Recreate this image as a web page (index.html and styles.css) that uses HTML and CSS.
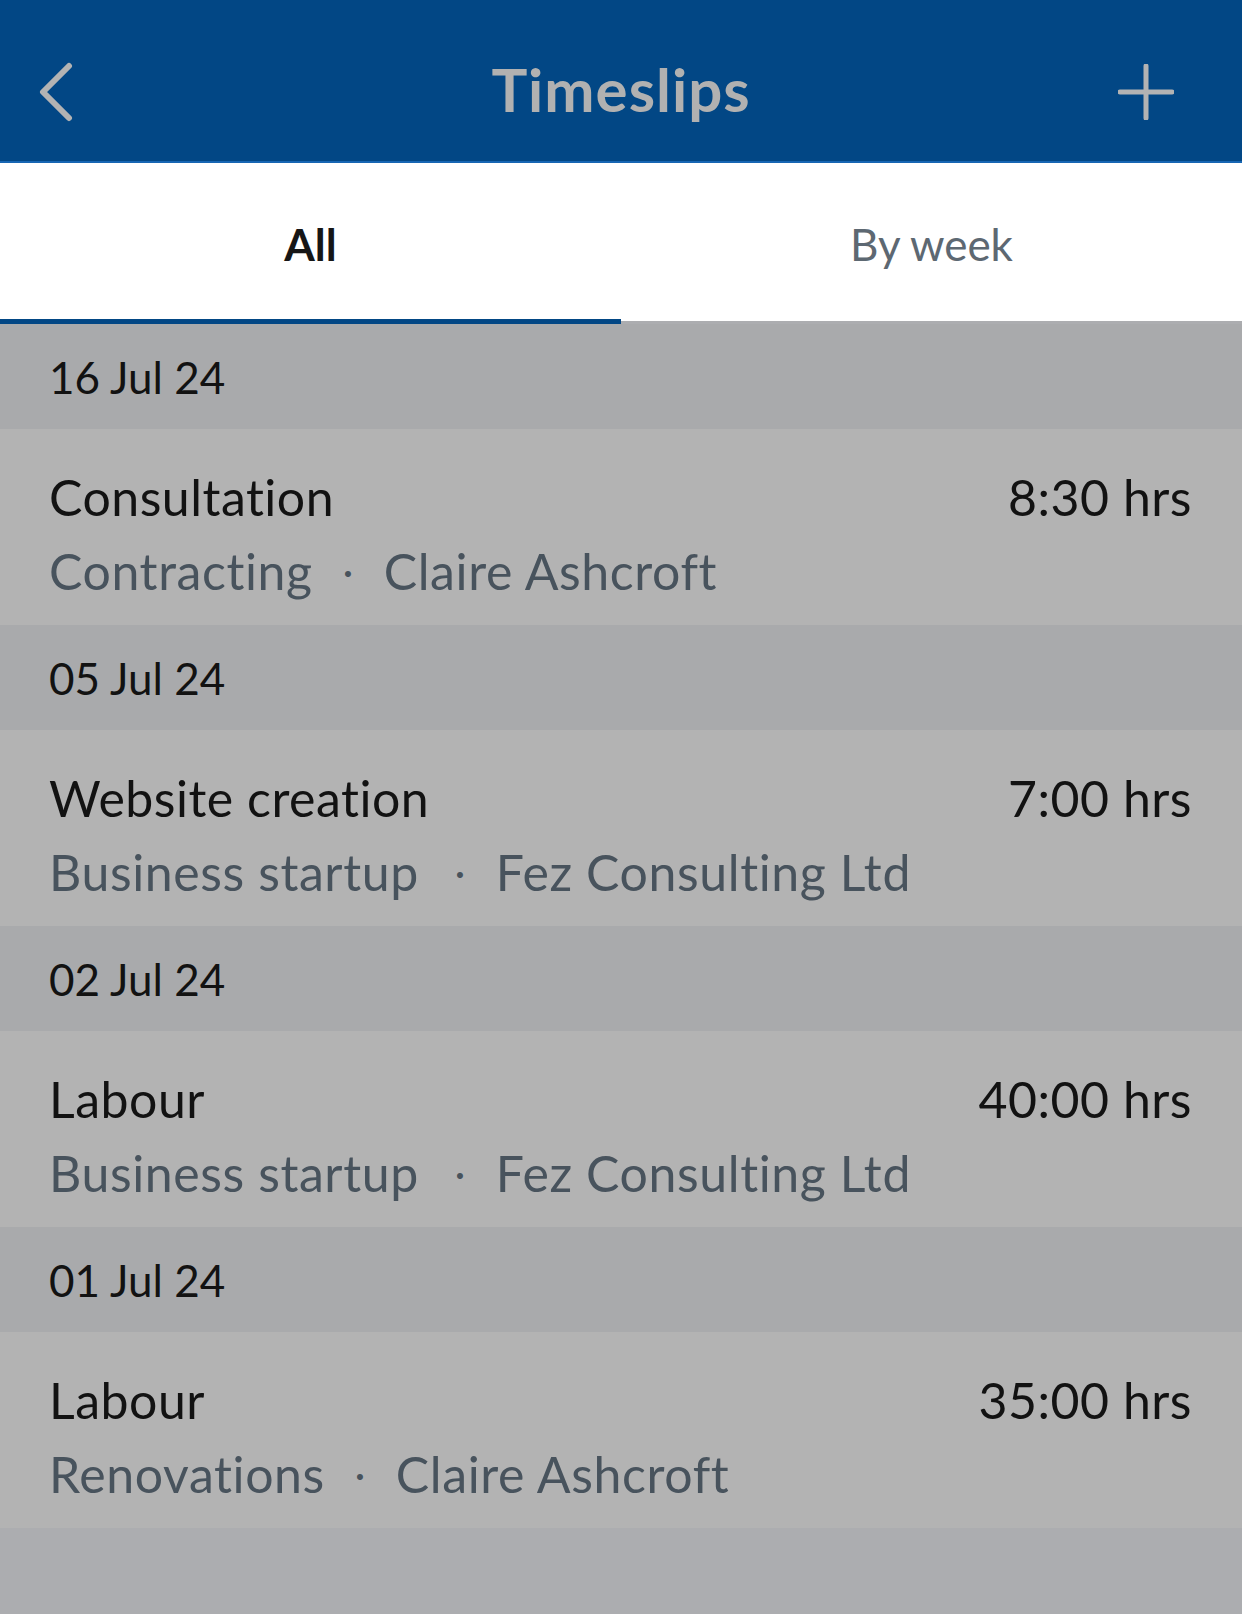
FILE: index.html
```html
<!DOCTYPE html>
<html lang="en">
<head>
<meta charset="utf-8">
<title>Timeslips</title>
<link rel="stylesheet" href="styles.css">
</head>
<body>
<header class="appbar">
  <button class="icon-btn back" aria-label="Back">
    <svg width="40" height="60" viewBox="0 0 40 60"><path d="M33 4 L7 30 L33 56" fill="none" stroke="#b3b3b3" stroke-width="6" stroke-linecap="round" stroke-linejoin="round"/></svg>
  </button>
  <h1 class="title">Timeslips</h1>
  <button class="icon-btn add" aria-label="Add">
    <svg width="56" height="56" viewBox="0 0 56 56"><path d="M28 2 V54 M2 28 H54" fill="none" stroke="#b3b3b3" stroke-width="5" stroke-linecap="round"/></svg>
  </button>
</header>
<nav class="tabs">
  <div class="tab active">All</div>
  <div class="tab">By week</div>
</nav>
<main class="list">
  <div class="date">16 Jul 24</div>
  <div class="item">
    <div class="row"><span class="name">Consultation</span><span class="hrs">8:30 hrs</span></div>
    <div class="meta"><span>Contracting</span><span class="sep">·</span><span>Claire Ashcroft</span></div>
  </div>
  <div class="date">05 Jul 24</div>
  <div class="item">
    <div class="row"><span class="name">Website creation</span><span class="hrs">7:00 hrs</span></div>
    <div class="meta"><span class="wide">Business startup</span><span class="sep">·</span><span>Fez Consulting Ltd</span></div>
  </div>
  <div class="date">02 Jul 24</div>
  <div class="item">
    <div class="row"><span class="name">Labour</span><span class="hrs">40:00 hrs</span></div>
    <div class="meta"><span class="wide">Business startup</span><span class="sep">·</span><span>Fez Consulting Ltd</span></div>
  </div>
  <div class="date">01 Jul 24</div>
  <div class="item">
    <div class="row"><span class="name">Labour</span><span class="hrs">35:00 hrs</span></div>
    <div class="meta"><span>Renovations</span><span class="sep">·</span><span>Claire Ashcroft</span></div>
  </div>
</main>
</body>
</html>
```
FILE: styles.css
```css
* { box-sizing: border-box; }
html, body { margin: 0; padding: 0; }
body {
  width: 1242px;
  min-height: 1614px;
  background: #acadb0;
  font-family: Lato, "Open Sans", "Liberation Sans", sans-serif;
  color: #111;
}
.appbar {
  height: 163px;
  background: #024785;
  border-bottom: 2px solid #1766b3;
  display: grid;
  grid-template-columns: 1fr auto 1fr;
  align-items: center;
  padding: 22px 36px 0 36px;
}
.icon-btn {
  background: none;
  border: 0;
  padding: 0;
  display: flex;
  align-items: center;
}
.back { justify-self: start; }
.add { justify-self: end; margin-right: 32px; }
.title {
  margin: -6px 0 0 0;
  font-size: 60px;
  font-weight: 700;
  color: #b1b1b1;
  letter-spacing: 1px;
}
.tabs {
  display: flex;
  align-items: flex-start;
  height: 161px;
}
.tab {
  flex: 1;
  height: 158px;
  background: #fff;
  display: flex;
  align-items: center;
  justify-content: center;
  font-size: 44px;
  color: #5d6872;
  padding-top: 4px;
}
.tab.active {
  height: 161px;
  color: #161616;
  font-weight: 700;
  border-bottom: 5px solid #024785;
  padding-top: 6px;
}
.list { display: flex; flex-direction: column; }
.date {
  height: 105px;
  background: #a9aaac;
  padding: 0 49px;
  display: flex;
  align-items: center;
  font-size: 44px;
  color: #121212;
}
.item {
  height: 196px;
  background: #b3b3b3;
  padding: 38px 50px 0 49px;
  display: flex;
  flex-direction: column;
  gap: 14px;
}
.row {
  display: flex;
  justify-content: space-between;
  font-size: 50px;
  color: #121212;
  letter-spacing: 0.5px;
}
.meta {
  display: flex;
  gap: 30px;
  font-size: 50px;
  color: #48535d;
  letter-spacing: 0.6px;
}
.meta .wide { margin-right: 6px; }
.sep { font-size: 40px; display: flex; align-items: center; }
```
